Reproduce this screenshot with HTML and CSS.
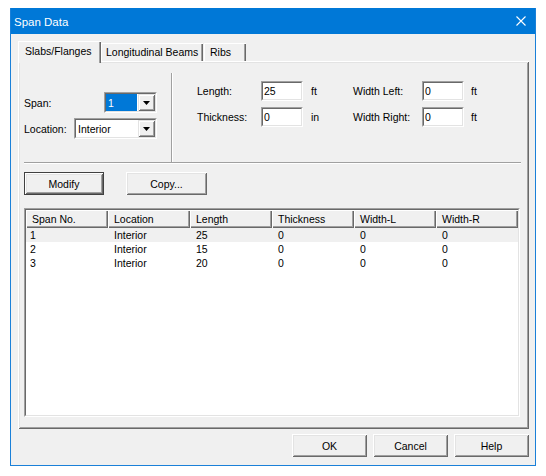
FILE: index.html
```html
<!DOCTYPE html>
<html>
<head>
    <title>Span Data</title>
    <link rel="stylesheet" href="styles.css">
</head>
<body>
    <div class="window">
        <div class="titlebar">
            <span class="title">Span Data</span>
            <svg class="close" width="10" height="10" viewBox="0 0 10 10">
                <path d="M0.5 0.5 L9.5 9.5 M9.5 0.5 L0.5 9.5" stroke="#fff" stroke-width="1.1" fill="none"/>
            </svg>
        </div>

        <div class="dialog-body">
            <div class="tabs">
                <div class="tab tab-active">Slabs/Flanges</div>
                <div class="tab tab-long">Longitudinal Beams</div>
                <div class="tab tab-ribs">Ribs</div>
            </div>

            <div class="panel">
                <div class="top-row">
                    <div class="span-col">
                        <div class="field-row">
                            <span>Span:</span>
                            <div class="combo combo-span">
                                <div class="combo-inner">
                                    <span class="combo-value selected">1</span>
                                    <span class="drop-btn"><svg width="7" height="4" viewBox="0 0 7 4"><polygon points="0,0 7,0 3.5,4" fill="#000"/></svg></span>
                                </div>
                            </div>
                        </div>
                        <div class="field-row">
                            <span>Location:</span>
                            <div class="combo combo-loc">
                                <div class="combo-inner">
                                    <span class="combo-value">Interior</span>
                                    <span class="drop-btn"><svg width="7" height="4" viewBox="0 0 7 4"><polygon points="0,0 7,0 3.5,4" fill="#000"/></svg></span>
                                </div>
                            </div>
                        </div>
                    </div>

                    <div class="vsep"></div>

                    <div class="dims">
                        <span>Length:</span>
                        <div class="textbox"><div class="textbox-inner">25</div></div>
                        <span class="unit">ft</span>
                        <span>Width Left:</span>
                        <div class="textbox"><div class="textbox-inner">0</div></div>
                        <span class="unit unit-right">ft</span>

                        <span>Thickness:</span>
                        <div class="textbox"><div class="textbox-inner">0</div></div>
                        <span class="unit">in</span>
                        <span>Width Right:</span>
                        <div class="textbox"><div class="textbox-inner">0</div></div>
                        <span class="unit unit-right">ft</span>
                    </div>
                </div>

                <div class="hsep"></div>

                <div class="actions">
                    <button class="btn btn-default btn-wide">Modify</button>
                    <button class="btn btn-wide btn-copy">Copy...</button>
                </div>

                <div class="list">
                    <div class="list-inner">
                        <div class="list-head">
                            <div>Span No.</div>
                            <div>Location</div>
                            <div>Length</div>
                            <div>Thickness</div>
                            <div>Width-L</div>
                            <div>Width-R</div>
                        </div>
                        <div class="list-row row-selected">
                            <div>1</div><div>Interior</div><div>25</div><div>0</div><div>0</div><div>0</div>
                        </div>
                        <div class="list-row">
                            <div>2</div><div>Interior</div><div>15</div><div>0</div><div>0</div><div>0</div>
                        </div>
                        <div class="list-row">
                            <div>3</div><div>Interior</div><div>20</div><div>0</div><div>0</div><div>0</div>
                        </div>
                    </div>
                </div>
            </div>

            <div class="footer">
                <button class="btn">OK</button>
                <button class="btn">Cancel</button>
                <button class="btn">Help</button>
            </div>
        </div>
    </div>
</body>
</html>
```

FILE: styles.css
```css
body {
    margin: 0;
    padding: 8px 0 0 10px;
    background-color: #fff;
    font-family: "Liberation Sans", Arial, sans-serif;
    font-size: 10.5px;
    color: #000;
}
.window {
    width: 526px;
    height: 458px;
    box-sizing: border-box;
    border: 1px solid #1a80d8;
    border-top: none;
    background-color: #f0f0f0;
}
.titlebar {
    height: 26px;
    background-color: #0078d7;
    color: white;
    display: flex;
    align-items: center;
    justify-content: space-between;
    padding: 0 9px 0 3px;
}
.title {
    font-size: 11.5px;
    padding-top: 1px;
}
.close {
    display: block;
}
.dialog-body {
    padding: 7px 6px 0 7px;
}

/* tabs */
.tabs {
    display: flex;
    align-items: flex-end;
    height: 22px;
}
.tab {
    box-sizing: border-box;
    height: 18px;
    margin-bottom: 2px;
    padding: 3px 0 0 5px;
    background-color: #f0f0f0;
    box-shadow: inset 1px 1px 0 #fff, inset -1px 0 0 #696969, inset -2px 0 0 #a0a0a0;
}
.tab-active {
    position: relative;
    z-index: 1;
    width: 83px;
    height: 22px;
    margin-bottom: 0;
    padding: 4px 0 0 7px;
    box-shadow: inset 1px 1px 0 #fff, inset -1px 0 0 #696969, inset -2px 0 0 #a0a0a0;
}
.tab-long {
    width: 102px;
    margin-left: 0;
}
.tab-ribs {
    width: 42px;
    margin-left: 1px;
    padding-left: 6px;
}

/* panel */
.panel {
    width: 511px;
    height: 368px;
    margin-top: -2px;
    box-sizing: border-box;
    background-color: #f0f0f0;
    box-shadow: inset 1px 1px 0 #fff, inset -1px -1px 0 #696969, inset 2px 2px 0 #e3e3e3, inset -2px -2px 0 #a0a0a0;
}
.top-row {
    display: flex;
    height: 101px;
}
.span-col {
    width: 153px;
    box-sizing: border-box;
    padding: 31px 0 0 6px;
}
.field-row {
    width: 133px;
    height: 21px;
    display: flex;
    align-items: center;
    justify-content: space-between;
    margin-bottom: 5px;
}
.vsep {
    width: 0;
    margin-top: 12px;
    border-left: 1px solid #a0a0a0;
    border-right: 1px solid #fff;
}
.dims {
    padding: 20px 0 0 24px;
    display: grid;
    grid-template-columns: 64px 42px 50px 69px 42px auto;
    grid-auto-rows: 20px;
    row-gap: 6px;
    align-items: center;
    align-content: start;
}
.unit {
    padding-left: 8px;
}
.unit-right {
    padding-left: 7px;
}
.hsep {
    width: 497px;
    margin-left: 6px;
    border-top: 1px solid #a0a0a0;
    border-bottom: 1px solid #fff;
}

/* sunken fields */
.combo, .textbox {
    box-sizing: border-box;
    border: 1px solid;
    border-color: #a0a0a0 #fff #fff #a0a0a0;
}
.combo-inner, .textbox-inner {
    height: 100%;
    box-sizing: border-box;
    border: 1px solid;
    border-color: #696969 #e3e3e3 #e3e3e3 #696969;
    background-color: #fff;
}
.combo {
    height: 21px;
}
.combo-span {
    width: 53px;
}
.combo-loc {
    width: 83px;
}
.combo-inner {
    display: flex;
}
.combo-value {
    flex: 1;
    display: flex;
    align-items: center;
    padding-left: 2px;
}
.combo-value.selected {
    background-color: #0078d7;
    color: white;
    margin: 0 1px 0 0;
}
.drop-btn {
    width: 17px;
    display: flex;
    align-items: center;
    justify-content: center;
    background-color: #f0f0f0;
    box-shadow: inset 1px 1px 0 #e3e3e3, inset -1px -1px 0 #696969, inset 2px 2px 0 #fff, inset -2px -2px 0 #a0a0a0;
}
.drop-btn svg {
    display: block;
    margin-top: 1px;
}
.textbox {
    height: 20px;
}
.textbox-inner {
    padding: 2px 0 0 1px;
}

/* buttons */
.btn {
    box-sizing: border-box;
    width: 75px;
    height: 23px;
    padding: 0;
    border: none;
    background-color: #f0f0f0;
    font-family: inherit;
    font-size: 10.5px;
    color: #000;
    box-shadow: inset 1px 1px 0 #fff, inset -1px -1px 0 #696969, inset 2px 2px 0 #e3e3e3, inset -2px -2px 0 #a0a0a0;
}
.btn-wide {
    width: 80px;
}
.btn-default {
    border: 1px solid #404040;
}
.btn-copy {
    width: 81px;
}
.actions {
    display: flex;
    gap: 22px;
    padding: 8px 0 0 6px;
}

/* list view */
.list {
    width: 496px;
    height: 209px;
    margin: 13px 0 0 6px;
    box-sizing: border-box;
    border: 1px solid;
    border-color: #a0a0a0 #fff #fff #a0a0a0;
}
.list-inner {
    height: 100%;
    box-sizing: border-box;
    border: 1px solid;
    border-color: #696969 #e3e3e3 #e3e3e3 #696969;
    background-color: #fff;
}
.list-head, .list-row {
    display: grid;
    grid-template-columns: repeat(6, 82px);
}
.list-head div {
    height: 18px;
    box-sizing: border-box;
    padding: 3px 0 0 6px;
    background-color: #f0f0f0;
    box-shadow: inset 1px 1px 0 #fff, inset -1px -1px 0 #696969, inset -2px -2px 0 #a0a0a0;
}
.list-row div {
    height: 14px;
    line-height: 14px;
    padding-left: 6px;
}
.list-row div:first-child {
    padding-left: 4px;
}
.row-selected {
    background-color: #f0f0f0;
}

.footer {
    display: flex;
    justify-content: flex-end;
    gap: 6px;
    width: 511px;
    padding-top: 5px;
}
```
